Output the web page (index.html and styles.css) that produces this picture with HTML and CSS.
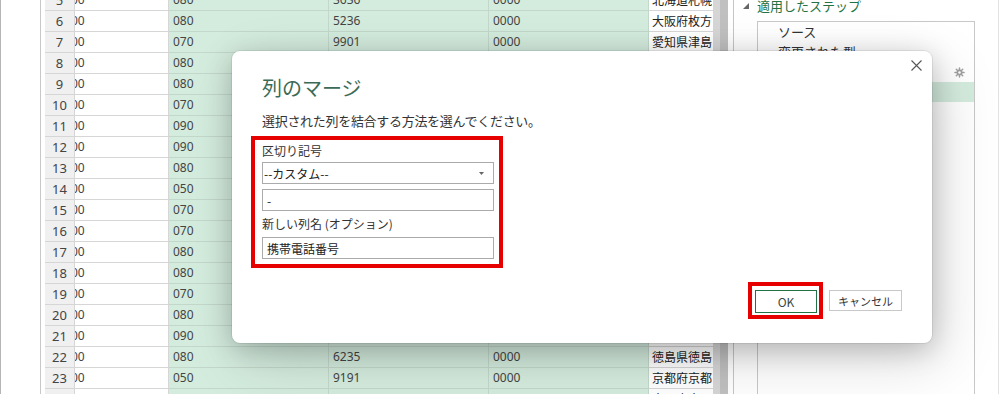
FILE: index.html
```html
<!DOCTYPE html>
<html lang="ja">
<head>
<meta charset="utf-8">
<title>列のマージ</title>
<link rel="stylesheet" href="styles.css">
</head>
<body>
<div class="app">
  <div class="gutter"></div>
  <div class="grid">
    <div class="row"><div class="cell rn">5</div><div class="cell c1">00</div><div class="cell g">080</div><div class="cell g">3636</div><div class="cell g">0000</div><div class="cell c5">北海道札幌</div></div>
    <div class="row"><div class="cell rn">6</div><div class="cell c1">00</div><div class="cell g">080</div><div class="cell g">5236</div><div class="cell g">0000</div><div class="cell c5">大阪府枚方</div></div>
    <div class="row"><div class="cell rn">7</div><div class="cell c1">00</div><div class="cell g">070</div><div class="cell g">9901</div><div class="cell g">0000</div><div class="cell c5">愛知県津島</div></div>
    <div class="row"><div class="cell rn">8</div><div class="cell c1">00</div><div class="cell g">080</div><div class="cell g">1234</div><div class="cell g">0000</div><div class="cell c5">東京都新宿</div></div>
    <div class="row"><div class="cell rn">9</div><div class="cell c1">00</div><div class="cell g">080</div><div class="cell g">4521</div><div class="cell g">0000</div><div class="cell c5">神奈川県横</div></div>
    <div class="row"><div class="cell rn">10</div><div class="cell c1">00</div><div class="cell g">070</div><div class="cell g">3318</div><div class="cell g">0000</div><div class="cell c5">福岡県福岡</div></div>
    <div class="row"><div class="cell rn">11</div><div class="cell c1">00</div><div class="cell g">090</div><div class="cell g">7702</div><div class="cell g">0000</div><div class="cell c5">兵庫県神戸</div></div>
    <div class="row"><div class="cell rn">12</div><div class="cell c1">00</div><div class="cell g">090</div><div class="cell g">2845</div><div class="cell g">0000</div><div class="cell c5">埼玉県川口</div></div>
    <div class="row"><div class="cell rn">13</div><div class="cell c1">00</div><div class="cell g">080</div><div class="cell g">6610</div><div class="cell g">0000</div><div class="cell c5">千葉県千葉</div></div>
    <div class="row"><div class="cell rn">14</div><div class="cell c1">00</div><div class="cell g">050</div><div class="cell g">4087</div><div class="cell g">0000</div><div class="cell c5">広島県広島</div></div>
    <div class="row"><div class="cell rn">15</div><div class="cell c1">00</div><div class="cell g">070</div><div class="cell g">5593</div><div class="cell g">0000</div><div class="cell c5">宮城県仙台</div></div>
    <div class="row"><div class="cell rn">16</div><div class="cell c1">00</div><div class="cell g">070</div><div class="cell g">8124</div><div class="cell g">0000</div><div class="cell c5">静岡県静岡</div></div>
    <div class="row"><div class="cell rn">17</div><div class="cell c1">00</div><div class="cell g">080</div><div class="cell g">3370</div><div class="cell g">0000</div><div class="cell c5">新潟県新潟</div></div>
    <div class="row"><div class="cell rn">18</div><div class="cell c1">00</div><div class="cell g">080</div><div class="cell g">9056</div><div class="cell g">0000</div><div class="cell c5">岡山県岡山</div></div>
    <div class="row"><div class="cell rn">19</div><div class="cell c1">00</div><div class="cell g">070</div><div class="cell g">1482</div><div class="cell g">0000</div><div class="cell c5">熊本県熊本</div></div>
    <div class="row"><div class="cell rn">20</div><div class="cell c1">00</div><div class="cell g">080</div><div class="cell g">7261</div><div class="cell g">0000</div><div class="cell c5">長野県長野</div></div>
    <div class="row"><div class="cell rn">21</div><div class="cell c1">00</div><div class="cell g">090</div><div class="cell g">5938</div><div class="cell g">0000</div><div class="cell c5">石川県金沢</div></div>
    <div class="row"><div class="cell rn">22</div><div class="cell c1">00</div><div class="cell g">080</div><div class="cell g">6235</div><div class="cell g">0000</div><div class="cell c5">徳島県徳島</div></div>
    <div class="row"><div class="cell rn">23</div><div class="cell c1">00</div><div class="cell g">050</div><div class="cell g">9191</div><div class="cell g">0000</div><div class="cell c5">京都府京都</div></div>
    <div class="row"><div class="cell rn">24</div><div class="cell c1">00</div><div class="cell g">080</div><div class="cell g">4416</div><div class="cell g">0000</div><div class="cell c5">大阪府大阪</div></div>
  </div>
  <div class="vscroll"></div>
  <div class="panel">
    <div class="ph">
      <svg class="tri" width="6" height="6" viewBox="0 0 6 6"><polygon points="6,0 6,6 0,6" fill="#666"/></svg>
      <span>適用したステップ</span>
    </div>
    <div class="steps">
      <div class="step">ソース</div>
      <div class="step">変更された型</div>
      <div class="step"><span>結合された列</span>
        <svg class="gear" width="11" height="11" viewBox="0 0 12 12"><g stroke="#a0a0a0" stroke-width="1.6" stroke-linecap="round"><line x1="6" y1="1" x2="6" y2="11"/><line x1="1" y1="6" x2="11" y2="6"/><line x1="2.5" y1="2.5" x2="9.5" y2="9.5"/><line x1="9.5" y1="2.5" x2="2.5" y2="9.5"/></g><circle cx="6" cy="6" r="3.2" fill="#a0a0a0"/><circle cx="6" cy="6" r="1.4" fill="#fff"/></svg>
      </div>
      <div class="step sel">削除された列</div>
    </div>
  </div>
</div>

<div class="dialog">
  <svg class="close" width="11" height="11" viewBox="0 0 11 11"><path d="M0.5 0.5 L10.5 10.5 M10.5 0.5 L0.5 10.5" stroke="#555" stroke-width="1.1" fill="none"/></svg>
  <div class="title">列のマージ</div>
  <div class="desc">選択された列を結合する方法を選んでください。</div>
  <div class="redbox">
    <div class="lbl">区切り記号</div>
    <div class="field select"><span>--カスタム--</span><svg width="5" height="3" viewBox="0 0 5 3"><polygon points="0,0 5,0 2.5,3" fill="#666"/></svg></div>
    <div class="field input gap5">-</div>
    <div class="lbl gap4">新しい列名 (オプション)</div>
    <div class="field input gap4">携帯電話番号</div>
  </div>
  <div class="footer">
    <div class="okwrap"><div class="btn ok">OK</div></div>
    <div class="btn cancel">キャンセル</div>
  </div>
</div>
</body>
</html>
```

FILE: styles.css
```css
html, body {
  margin: 0;
  padding: 0;
}
body {
  width: 1000px;
  height: 394px;
  overflow: hidden;
  background: #fff;
  position: relative;
  font-family: "Noto Sans CJK JP", sans-serif;
  color: #333;
}
.app {
  display: flex;
  height: 394px;
}
.gutter {
  width: 41px;
  flex: none;
  box-sizing: border-box;
  border-left: 1px solid #b5b5b5;
  border-right: 1px solid #c8c8c8;
}
.grid {
  width: 672px;
  flex: none;
  box-sizing: border-box;
  padding-left: 4px;
  margin-top: -10px;
  overflow: hidden;
}
.row {
  display: grid;
  grid-template-columns: 30px 94px 160px 160px 160px 64px;
  height: 21px;
}
.cell {
  box-sizing: border-box;
  height: 21px;
  border-bottom: 1px solid #d6d6d6;
  border-right: 1px solid #d6d6d6;
  line-height: 20px;
  font-family: "Noto Sans", "Noto Sans CJK JP", sans-serif;
  font-size: 12px;
  color: #444;
  padding-left: 4px;
  overflow: hidden;
  white-space: nowrap;
}
.rn {
  background: #f0f0f0;
  text-align: center;
  padding-left: 0;
  font-size: 13px;
  color: #444;
}
.c1 {
  padding-left: 0;
  text-indent: -4px;
}
.g {
  background: #d4ecde;
  border-color: #c3d8cb;
}
.c5 {
  border-right: none;
  padding-left: 3px;
  font-family: "Noto Sans CJK JP", sans-serif;
  color: #222;
}
.vscroll {
  width: 15px;
  flex: none;
  background: linear-gradient(to right, #d6d6d6 7px, #c0c0c0 7px);
}
.panel {
  width: 266px;
  flex: none;
  margin-left: 5px;
  box-sizing: border-box;
  border-left: 1px solid #c6c6c6;
  border-right: 1px solid #e2e2e2;
}
.ph {
  display: flex;
  align-items: center;
  gap: 8px;
  height: 12px;
  padding-left: 9px;
  font-size: 13px;
  line-height: 12px;
  color: #217346;
}
.steps {
  margin: 9px 0 0 23px;
  width: 218px;
  height: 400px;
  box-sizing: border-box;
  border: 1px solid #c8c8c8;
}
.step {
  height: 20px;
  line-height: 20px;
  padding: 0 9px 0 20px;
  font-size: 13px;
  color: #333;
  display: flex;
  align-items: center;
  justify-content: space-between;
}
.step.sel {
  background: #d4ecde;
}
.dialog {
  position: absolute;
  left: 232px;
  top: 51px;
  width: 700px;
  height: 292px;
  box-sizing: border-box;
  padding: 24px 30px 24px 30px;
  background: #fff;
  border-radius: 8px;
  box-shadow: 0 0 0 1px rgba(0,0,0,0.07), 0 6px 28px rgba(0,0,0,0.22), 10px 18px 60px rgba(0,0,0,0.14);
  display: flex;
  flex-direction: column;
}
.close {
  position: absolute;
  top: 9px;
  right: 10px;
}
.title {
  font-size: 20px;
  line-height: 26px;
  color: #3b6b56;
}
.desc {
  margin-top: 11px;
  font-size: 13px;
  line-height: 18px;
  letter-spacing: -0.3px;
  color: #333;
}
.redbox {
  margin: 6px 0 0 -11px;
  width: 252px;
  box-sizing: border-box;
  border: 4px solid #e60000;
  padding: 2px 5px 5px 7px;
}
.lbl {
  font-size: 12px;
  line-height: 18px;
  color: #333;
}
.field {
  height: 22px;
  box-sizing: border-box;
  border: 1px solid #ababab;
  font-size: 12px;
  color: #222;
  display: flex;
  align-items: center;
  margin-top: 2px;
}
.select {
  padding: 0 9px 0 1px;
  justify-content: space-between;
}
.input {
  padding-left: 4px;
}
.gap5 { margin-top: 5px; }
.gap4 { margin-top: 4px; }
.footer {
  margin-top: auto;
  display: flex;
  justify-content: flex-end;
  align-items: center;
  gap: 6px;
}
.okwrap {
  border: 4px solid #e60000;
  padding: 4px 2px 2px 3px;
}
.btn {
  box-sizing: border-box;
  display: flex;
  align-items: center;
  justify-content: center;
  background: #fff;
  color: #333;
}
.ok {
  width: 62px;
  height: 23px;
  border: 1px solid #217346;
  font-size: 12px;
  color: #3a4a42;
}
.cancel {
  width: 73px;
  height: 21px;
  border: 1px solid #c8c8c8;
  font-size: 11px;
}
```
